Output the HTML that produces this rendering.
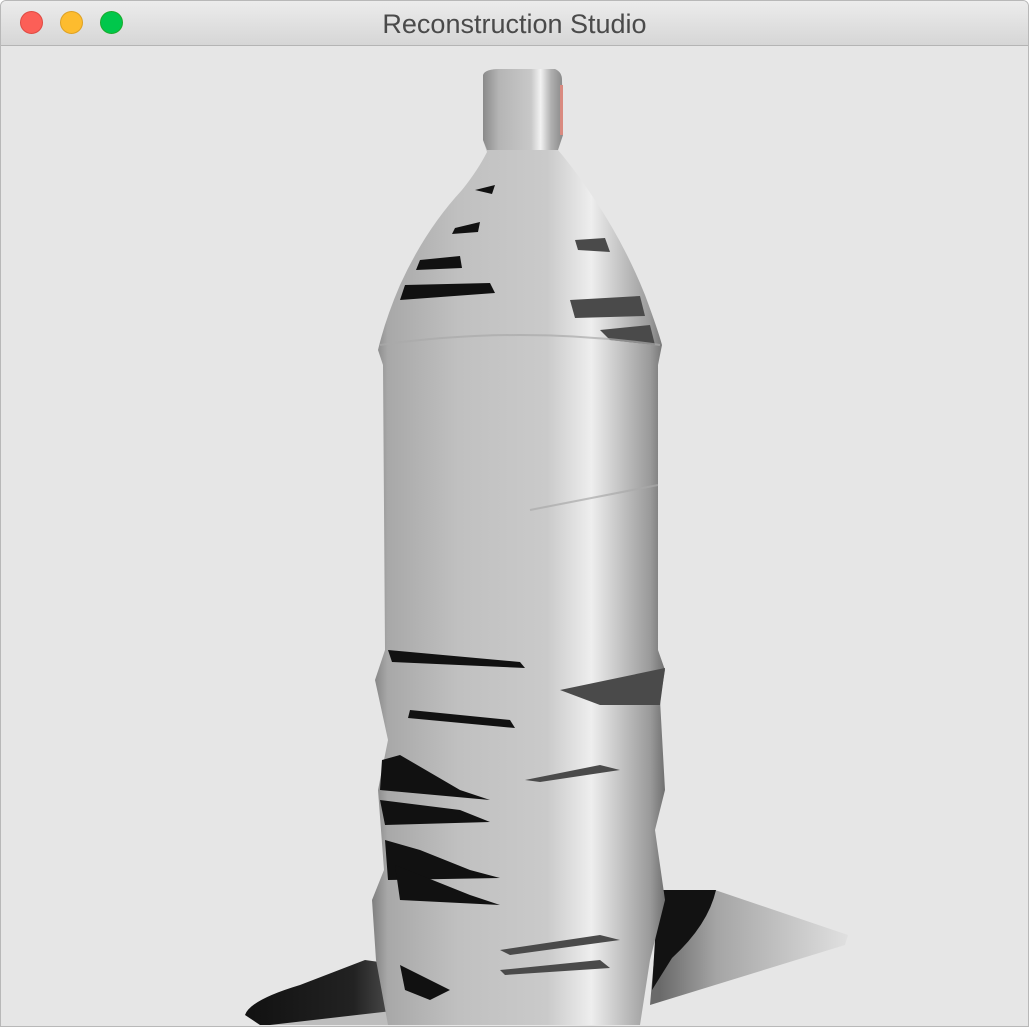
<!DOCTYPE html>
<html><head><meta charset="utf-8"><style>
html,body{margin:0;padding:0;width:1029px;height:1027px;overflow:hidden;background:#fff}
.win{position:absolute;left:0;top:0;width:1027px;height:1025px;border:1px solid #b8b8b8;border-radius:6px 6px 0 0;background:#e6e6e6;overflow:hidden}
.tb{position:absolute;left:0;top:0;width:100%;height:44px;background:linear-gradient(#ececec,#d6d6d6);border-bottom:1px solid #b4b4b4}
.dot{position:absolute;top:10px;width:23px;height:23px;border-radius:50%;box-sizing:border-box}
.t{position:absolute;left:0;right:0;top:8px;text-align:center;font:27px "Liberation Sans",sans-serif;color:#4a4a4a}
svg{position:absolute;left:0;top:0}
</style></head><body>
<div class="win">
<div class="tb">
<div class="dot" style="left:19px;background:#fc5f57;border:1px solid #df4a42"></div>
<div class="dot" style="left:59px;background:#fdbc2e;border:1px solid #dea122"></div>
<div class="dot" style="left:99px;background:#00c74b;border:1px solid #1aab2b"></div>
<div class="t">Reconstruction Studio</div>
</div>
</div>
<svg width="1029" height="1027" viewBox="0 0 1029 1027">
<defs>
<linearGradient id="cyl" x1="370" x2="665" y1="0" y2="0" gradientUnits="userSpaceOnUse">
<stop offset="0" stop-color="#7a7a7a"/><stop offset="0.06" stop-color="#a8a8a8"/><stop offset="0.3" stop-color="#c0c0c0"/>
<stop offset="0.6" stop-color="#cacaca"/><stop offset="0.75" stop-color="#eeeeee"/><stop offset="0.83" stop-color="#cccccc"/>
<stop offset="0.95" stop-color="#9a9a9a"/><stop offset="1" stop-color="#707070"/></linearGradient>
<linearGradient id="nk" x1="483" x2="563" y1="0" y2="0" gradientUnits="userSpaceOnUse">
<stop offset="0" stop-color="#8a8a8a"/><stop offset="0.2" stop-color="#b5b5b5"/><stop offset="0.6" stop-color="#c8c8c8"/>
<stop offset="0.72" stop-color="#f2f2f2"/><stop offset="0.85" stop-color="#b0b0b0"/><stop offset="1" stop-color="#888"/></linearGradient>
<linearGradient id="sr" x1="660" x2="848" y1="0" y2="0" gradientUnits="userSpaceOnUse">
<stop offset="0" stop-color="#6a6a6a"/><stop offset="0.3" stop-color="#a5a5a5"/><stop offset="1" stop-color="#e0e0e0"/></linearGradient>
<linearGradient id="sl" x1="245" x2="400" y1="0" y2="0" gradientUnits="userSpaceOnUse">
<stop offset="0" stop-color="#111"/><stop offset="0.7" stop-color="#222"/><stop offset="1" stop-color="#555"/></linearGradient>
</defs>
<path d="M660 890 L715 890 L848 935 L845 945 L650 1005 Z" fill="url(#sr)"/>
<path d="M658 890 L716 890 Q708 925 672 958 L652 990 Z" fill="#121212"/>
<path d="M245 1015 Q250 1000 300 985 L365 960 L400 965 L395 1025 L260 1025 Z" fill="url(#sl)"/>
<path d="M270 1025 L400 1010 L400 1025 Z" fill="#bdbdbd"/>
<path d="M483 75 Q485 69 500 69 L555 69 Q562 72 562 80 L563 135 L558 150 Q575 170 595 200 Q625 245 645 295 Q658 330 662 345 L658 365 L658 650 L665 670 L660 700 L665 790 L655 830 L665 900 L650 960 L640 1025 L388 1025 L376 960 L372 900 L384 870 L378 790 L388 740 L375 680 L385 650 L383 365 L378 350 Q385 320 400 285 Q425 230 462 190 Q478 170 487 152 L483 140 Z" fill="url(#cyl)"/>
<path d="M483 75 Q485 69 500 69 L555 69 Q562 72 562 80 L563 135 L558 150 L487 150 L483 140 Z" fill="url(#nk)"/>
<g fill="#111">
<path d="M475 190 L495 185 L492 194 Z"/><path d="M455 228 L480 222 L478 232 L452 234 Z"/>
<path d="M420 260 L460 256 L462 268 L416 270 Z"/><path d="M405 285 L490 283 L495 293 L400 300 Z"/>
<path d="M388 650 L520 662 L525 668 L392 662 Z"/><path d="M410 710 L510 720 L515 728 L408 718 Z"/>
<path d="M382 760 L400 755 L460 790 L490 800 L380 790 Z"/><path d="M380 800 L460 810 L490 822 L385 825 Z"/>
<path d="M385 840 L420 850 L470 870 L500 878 L388 880 Z"/><path d="M395 865 L470 895 L500 905 L400 900 Z"/>
<path d="M400 965 L420 975 L450 990 L430 1000 L405 990 Z"/>
</g>
<g fill="#4a4a4a">
<path d="M575 240 L605 238 L610 252 L578 250 Z"/><path d="M570 300 L640 296 L645 316 L575 318 Z"/>
<path d="M600 330 L650 325 L655 345 L610 340 Z"/><path d="M560 690 L665 668 L660 705 L600 705 Z"/>
<path d="M525 780 L600 765 L620 770 L540 782 Z"/><path d="M500 950 L600 935 L620 940 L510 955 Z"/>
<path d="M500 970 L600 960 L610 968 L505 975 Z"/>
</g>
<g stroke="#aaa" stroke-width="2" fill="none" opacity="0.7">
<path d="M380 345 Q520 325 660 345"/><path d="M530 510 L658 485"/>
</g>
<path d="M560 85 L563 85 L563 135 L560 135 Z" fill="#d98a80"/>
</svg>
</body></html>
